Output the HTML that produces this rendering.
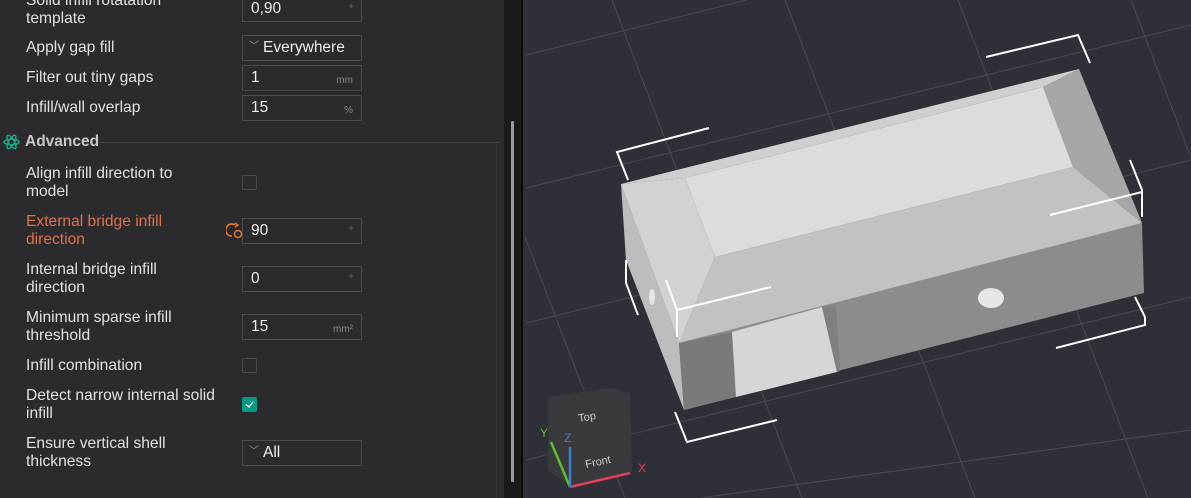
<!DOCTYPE html>
<html><head><meta charset="utf-8"><style>
*{margin:0;padding:0;box-sizing:border-box}
body{width:1191px;height:498px;overflow:hidden;background:#2b2b2e;font-family:"Liberation Sans",sans-serif;position:relative}
.l{position:absolute;left:26px;color:#e2e2e2;font-size:15.6px;line-height:18px}
.o{color:#e2704a}
.b{position:absolute;left:242px;width:120px;height:26px;border:1px solid #4a4a4f;color:#eee;font-size:15.5px;line-height:24px;padding-left:8px}
.u{position:absolute;right:8px;top:1px;font-size:10px;color:#8a8a8a}
.c{position:absolute;left:242px;width:15px;height:15px;border:1px solid #4a4a4f;border-radius:2px}
</style></head><body>
<div class="l" style="top:-8px">Solid infill rotatation<br>template</div>
<div class="b" style="top:-4px">0,90<span class="u">°</span></div>
<div class="l" style="top:39px">Apply gap fill</div>
<div class="b" style="top:35px;padding-left:20px"><span style="position:absolute;left:6px;top:-1px;color:#999;font-size:10px">﹀</span>Everywhere</div>
<div class="l" style="top:69px">Filter out tiny gaps</div>
<div class="b" style="top:65px">1<span class="u" style="top:3px">mm</span></div>
<div class="l" style="top:99px">Infill/wall overlap</div>
<div class="b" style="top:95px">15<span class="u" style="top:3px">%</span></div>
<svg style="position:absolute;left:3px;top:134px" width="17" height="16" viewBox="0 0 18 16"><g fill="none" stroke="#1aa88e" stroke-width="1.5"><ellipse cx="9" cy="8" rx="8" ry="3"/><ellipse cx="9" cy="8" rx="8" ry="3" transform="rotate(60 9 8)"/><ellipse cx="9" cy="8" rx="8" ry="3" transform="rotate(-60 9 8)"/></g></svg>
<div style="position:absolute;left:25px;top:133px;color:#c8c8c8;font-size:15.5px;font-weight:bold">Advanced</div>
<div style="position:absolute;left:100px;top:142px;width:399px;height:1px;background:#444448"></div>
<div style="position:absolute;left:496px;top:143px;width:1px;height:355px;background:#333337"></div>
<div class="l" style="top:165px">Align infill direction to<br>model</div>
<div class="c" style="top:175px"></div>
<div class="l o" style="top:213px">External bridge infill<br>direction</div>
<svg style="position:absolute;left:226px;top:222px" width="18" height="18" viewBox="0 0 18 18"><path d="M9 3A6 6 0 1 0 6 14" fill="none" stroke="#e87a2a" stroke-width="1.6"/><path d="M9 1l3 2-3 2" fill="none" stroke="#e87a2a" stroke-width="1.4"/><circle cx="12" cy="12" r="3.5" fill="none" stroke="#e87a2a" stroke-width="1.4"/></svg>
<div class="b" style="top:218px">90<span class="u">°</span></div>
<div class="l" style="top:261px">Internal bridge infill<br>direction</div>
<div class="b" style="top:266px">0<span class="u">°</span></div>
<div class="l" style="top:309px">Minimum sparse infill<br>threshold</div>
<div class="b" style="top:314px">15<span class="u" style="top:3px">mm²</span></div>
<div class="l" style="top:357px">Infill combination</div>
<div class="c" style="top:358px"></div>
<div class="l" style="top:387px">Detect narrow internal solid<br>infill</div>
<div class="c" style="top:397px;background:#009a84;border-color:#009a84"><svg width="13" height="13" viewBox="0 0 13 13" style="position:absolute;left:0;top:0"><path d="M3 6.5l3 2.5 4-5" fill="none" stroke="#fff" stroke-width="1.2"/></svg></div>
<div class="l" style="top:435px">Ensure vertical shell<br>thickness</div>
<div class="b" style="top:440px;padding-left:20px"><span style="position:absolute;left:6px;top:-1px;color:#999;font-size:10px">﹀</span>All</div>
<div style="position:absolute;left:504px;top:0;width:17px;height:498px;background:#1a1a1a"></div>
<div style="position:absolute;left:511px;top:121px;width:3px;height:361px;background:#9a9a9a;border-radius:1px"></div>
<div style="position:absolute;left:521px;top:0;width:2px;height:498px;background:#0c0c0c"></div>
<svg style="position:absolute;left:523px;top:0" width="668" height="498" viewBox="523 0 668 498">
<rect x="523" y="0" width="668" height="498" fill="#2f2f37"/>
<g stroke="#4a4a52" stroke-width="1">
<line x1="526" y1="55" x2="747" y2="0"/>
<line x1="526" y1="188" x2="1191" y2="25"/>
<line x1="526" y1="323" x2="1191" y2="160"/>
<line x1="526" y1="460" x2="1191" y2="297"/>
<line x1="700" y1="498" x2="1191" y2="430"/>
<line x1="612" y1="0" x2="802" y2="498"/>
<line x1="785" y1="0" x2="975" y2="498"/>
<line x1="958" y1="0" x2="1148" y2="498"/>
<line x1="1131" y1="0" x2="1290" y2="418"/>
<line x1="525" y1="237" x2="625" y2="498"/>
</g>
<polygon points="621,184 626,260 684,410 679,343" fill="#bdbdbd"/>
<polygon points="679,330 1142,223 1144,293 684,410" fill="#8c8c8c"/>
<polygon points="679,343 732,332 736,397 684,410" fill="#7a7a7a"/>
<polygon points="732,332 822,307 837,372 736,397" fill="#d6d6d6"/>
<polygon points="822,307 836,304 840,371 837,372" fill="#808080"/>
<polygon points="621,184 1079,69 1043,87 685,178" fill="#cfcfcf"/>
<polygon points="1079,69 1142,223 1073,167 1043,87" fill="#a7a7a7"/>
<polygon points="621,184 685,178 715,257 679,343" fill="#d2d2d2"/>
<polygon points="715,257 1073,167 1142,223 679,343" fill="#c2c2c2"/>
<polygon points="685,178 1043,87 1073,167 715,257" fill="#dcdcdc"/>
<ellipse cx="991" cy="298" rx="13" ry="10" fill="#e6e6e6"/>
<ellipse cx="652" cy="297" rx="3" ry="8" fill="#e6e6e6"/>
<g stroke="#fff" stroke-width="2" fill="none">
<polyline points="709,128 617,152 628,180"/>
<polyline points="986,57 1078,35 1090,63"/>
<polyline points="1130,160 1142,190 1142,217"/>
<line x1="1050" y1="215" x2="1142" y2="192"/>
<polyline points="626,260 626,283 638,315"/>
<polyline points="666,280 677,310 677,337"/>
<line x1="677" y1="310" x2="771" y2="287"/>
<polyline points="1135,297 1145,317 1145,325 1056,348"/>
<polyline points="675,412 687,442 777,420"/>
</g>
<polygon points="548,397 612,388 630,393 632,472 572,488 548,470" fill="#3a3a3e"/>
<text x="578" y="420" fill="#ccc" font-size="11" font-family="Liberation Sans" transform="rotate(-10 590 416)">Top</text>
<text x="585" y="465" fill="#ccc" font-size="11" font-family="Liberation Sans" transform="rotate(-12 600 461)">Front</text>
<line x1="570" y1="487" x2="630" y2="473" stroke="#e0405a" stroke-width="2.5"/>
<line x1="570" y1="487" x2="551" y2="442" stroke="#5cc02a" stroke-width="2.5"/>
<line x1="570" y1="487" x2="570" y2="447" stroke="#3a80d0" stroke-width="2.5"/>
<text x="638" y="472" fill="#e0405a" font-size="12" font-family="Liberation Sans">X</text>
<text x="540" y="437" fill="#5cc02a" font-size="12" font-family="Liberation Sans">Y</text>
<text x="564" y="442" fill="#3a80d0" font-size="12" font-family="Liberation Sans">Z</text>
</svg>
</body></html>
